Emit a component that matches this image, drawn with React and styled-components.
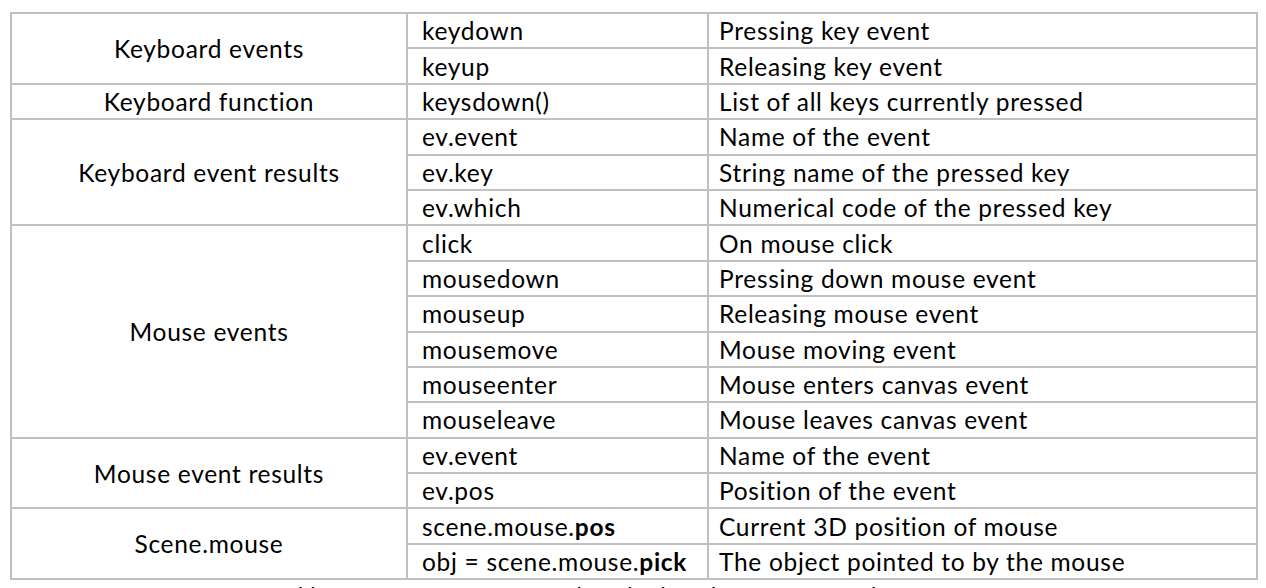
import { createGlobalStyle, styled } from "styled-components"

const GlobalStyle = createGlobalStyle`
   html, body {
      margin: 0;
      padding: 0;
      background: #ffffff;
      overflow: hidden;
   }
   body {
      font-family: Lato, "Open Sans", sans-serif;
      color: #000000;
   }
`

const Page = styled.div`
   padding: 12px 10px 0 10px;
   width: 1266px;
   height: 588px;
   box-sizing: border-box;
   overflow: hidden;
`

const Table = styled.table`
   width: 1246px;
   border-collapse: collapse;
   table-layout: fixed;
   border: 2px solid #c0c0c0;
   font-size: 24.5px;
   letter-spacing: 0.7px;
`

const Col = styled.col`
   width: ${(p) => p.$w}px;
`

const Row = styled.tr`
   height: 35.4px;
`

const GroupCell = styled.td`
   text-align: center;
   vertical-align: middle;
   border: 2px solid #c0c0c0;
   padding: 0;
`

const NameCell = styled.td`
   border: 2px solid #c0c0c0;
   padding: 0 0 0 14px;
   white-space: nowrap;
`

const DescCell = styled.td`
   border: 2px solid #c0c0c0;
   padding: 0 0 0 10px;
   white-space: nowrap;
`

const Strong = styled.b`
   font-weight: 700;
`

const Caption = styled.div`
   margin-top: 4px;
   text-align: center;
   font-size: 22px;
   line-height: 22px;
   word-spacing: 40px;
`

const groups = [
   {
      title: "Keyboard events",
      items: [
         ["keydown", "Pressing key event"],
         ["keyup", "Releasing key event"],
      ],
   },
   {
      title: "Keyboard function",
      items: [["keysdown()", "List of all keys currently pressed"]],
   },
   {
      title: "Keyboard event results",
      items: [
         ["ev.event", "Name of the event"],
         ["ev.key", "String name of the pressed key"],
         ["ev.which", "Numerical code of the pressed key"],
      ],
   },
   {
      title: "Mouse events",
      items: [
         ["click", "On mouse click"],
         ["mousedown", "Pressing down mouse event"],
         ["mouseup", "Releasing mouse event"],
         ["mousemove", "Mouse moving event"],
         ["mouseenter", "Mouse enters canvas event"],
         ["mouseleave", "Mouse leaves canvas event"],
      ],
   },
   {
      title: "Mouse event results",
      items: [
         ["ev.event", "Name of the event"],
         ["ev.pos", "Position of the event"],
      ],
   },
   {
      title: "Scene.mouse",
      items: [
         [<>scene.mouse.<Strong>pos</Strong></>, "Current 3D position of mouse"],
         [<>obj = scene.mouse.<Strong>pick</Strong></>, "The object pointed to by the mouse"],
      ],
   },
]

const App = () => {
   return (
      <Page>
         <GlobalStyle />
         <Table>
            <colgroup>
               <Col $w={396} />
               <Col $w={301} />
               <Col $w={549} />
            </colgroup>
            <tbody>
               {groups.map((group) =>
                  group.items.map(([name, desc], i) => (
                     <Row key={group.title + i}>
                        {i === 0 && (
                           <GroupCell rowSpan={group.items.length}>{group.title}</GroupCell>
                        )}
                        <NameCell>{name}</NameCell>
                        <DescCell>{desc}</DescCell>
                     </Row>
                  ))
               )}
            </tbody>
         </Table>
         <Caption>Table 1: mouse and keyboard events in scene</Caption>
      </Page>
   )
}

export default App
